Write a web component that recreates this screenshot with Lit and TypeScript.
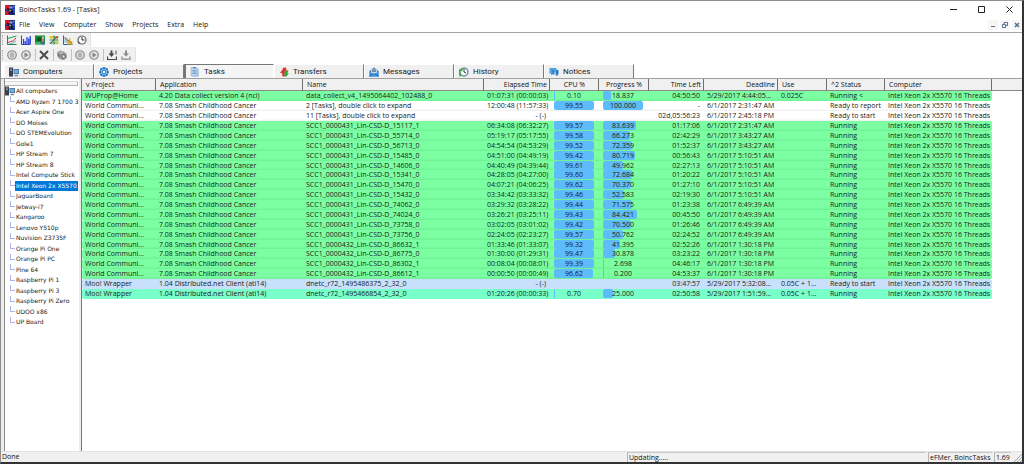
import { LitElement, html, css, svg, nothing } from 'lit';
import { customElement, state } from 'lit/decorators.js';
import { classMap } from 'lit/directives/class-map.js';

interface Task {
  project: string; app: string; name: string; elapsed: string;
  cpu?: string; progress?: string; left: string; deadline: string;
  use?: string; status: string; tone: string;
}

const wcg = (name: string, elapsed: string, cpu: string, progress: string, left: string, deadline: string): Task => ({
  project: 'World Communi...', app: '7.08 Smash Childhood Cancer', name: 'SCC1_' + name,
  elapsed, cpu, progress, left, deadline: '6/1/2017 ' + deadline, status: 'Running', tone: 'run',
});

const TASKS: Task[] = [
  { project: 'WUProp@Home', app: '4.20 Data collect version 4 (nci)', name: 'data_collect_v4_1495064402_102488_0', elapsed: '01:07:31 (00:00:03)', cpu: '0.10', progress: '18.837', left: '04:50:50', deadline: '5/29/2017 4:44:05...', use: '0.025C', status: 'Running <', tone: 'run' },
  { project: 'World Communi...', app: '7.08 Smash Childhood Cancer', name: '2 [Tasks], double click to expand', elapsed: '12:00:48 (11:57:33)', cpu: '99.55', progress: '100.000', left: '-', deadline: '6/1/2017 2:31:47 AM', status: 'Ready to report', tone: 'plain' },
  { project: 'World Communi...', app: '7.08 Smash Childhood Cancer', name: '11 [Tasks], double click to expand', elapsed: '- (-)', left: '02d,05:56:23', deadline: '6/1/2017 2:45:18 PM', status: 'Ready to start', tone: 'plain' },
  wcg('0000431_Lin-CSD-D_15117_1', '06:34:08 (06:32:27)', '99.57', '83.639', '01:17:06', '2:31:47 AM'),
  wcg('0000431_Lin-CSD-D_55714_0', '05:19:17 (05:17:55)', '99.58', '66.273', '02:42:29', '3:43:27 AM'),
  wcg('0000431_Lin-CSD-D_56713_0', '04:54:54 (04:53:29)', '99.52', '72.359', '01:52:37', '3:43:27 AM'),
  wcg('0000431_Lin-CSD-D_15485_0', '04:51:00 (04:49:19)', '99.42', '80.719', '00:56:43', '5:10:51 AM'),
  wcg('0000431_Lin-CSD-D_14606_0', '04:40:49 (04:39:44)', '99.61', '49.962', '02:27:13', '5:10:51 AM'),
  wcg('0000431_Lin-CSD-D_15341_0', '04:28:05 (04:27:00)', '99.60', '72.684', '01:20:22', '5:10:51 AM'),
  wcg('0000431_Lin-CSD-D_15470_0', '04:07:21 (04:06:25)', '99.62', '70.370', '01:27:10', '5:10:51 AM'),
  wcg('0000431_Lin-CSD-D_15432_0', '03:34:42 (03:33:32)', '99.46', '52.583', '02:19:30', '5:10:51 AM'),
  wcg('0000431_Lin-CSD-D_74062_0', '03:29:32 (03:28:22)', '99.44', '71.575', '01:23:38', '6:49:39 AM'),
  wcg('0000431_Lin-CSD-D_74024_0', '03:26:21 (03:25:11)', '99.43', '84.421', '00:45:50', '6:49:39 AM'),
  wcg('0000431_Lin-CSD-D_73758_0', '03:02:05 (03:01:02)', '99.42', '70.500', '01:26:46', '6:49:39 AM'),
  wcg('0000431_Lin-CSD-D_73756_0', '02:24:05 (02:23:27)', '99.57', '50.762', '02:24:52', '6:49:39 AM'),
  wcg('0000432_Lin-CSD-D_86632_1', '01:33:46 (01:33:07)', '99.32', '41.395', '02:52:26', '1:30:18 PM'),
  wcg('0000432_Lin-CSD-D_86775_0', '01:30:00 (01:29:31)', '99.47', '30.878', '03:23:22', '1:30:18 PM'),
  wcg('0000432_Lin-CSD-D_86302_1', '00:08:04 (00:08:01)', '99.39', '2.698', '04:46:17', '1:30:18 PM'),
  wcg('0000432_Lin-CSD-D_86612_1', '00:00:50 (00:00:49)', '96.62', '0.200', '04:53:37', '1:30:18 PM'),
  { project: 'Moo! Wrapper', app: '1.04 Distributed.net Client (ati14)', name: 'dnetc_r72_1495486375_2_32_0', elapsed: '- (-)', left: '03:47:57', deadline: '5/29/2017 5:32:08...', use: '0.05C + 1...', status: 'Ready to start', tone: 'wait' },
  { project: 'Moo! Wrapper', app: '1.04 Distributed.net Client (ati14)', name: 'dnetc_r72_1495466854_2_32_0', elapsed: '01:20:26 (00:00:33)', cpu: '0.70', progress: '25.000', left: '02:50:58', deadline: '5/29/2017 1:51:59...', use: '0.05C + 1...', status: 'Running', tone: 'gpu' },
];

const COMPUTERS = ['AMD Ryzen 7 1700 3', 'Acer Aspire One', 'DO Moises', 'DO STEMEvolution', 'Gole1', 'HP Stream 7', 'HP Stream 8',
  'Intel Compute Stick', 'Intel Xeon 2x X5570', 'JaguarBoard', 'Jetway-i7', 'Kangaroo', 'Lenovo Y510p', 'Nuvision Z3735F',
  'Orange Pi One', 'Orange Pi PC', 'Pine 64', 'Raspberry Pi 1', 'Raspberry Pi 3', 'Raspberry Pi Zero', 'UDOO x86', 'UP Board'];

const pause = svg`<circle cx="10" cy="10" r="8.500" fill="#e2e2e2" stroke="#8a8a8a" stroke-width="2.400"/><path d="M8 5v10M12 5v10" stroke="#858585" stroke-width="2"/>`;
const play = svg`<circle cx="10" cy="10" r="8.500" fill="#e2e2e2" stroke="#8a8a8a" stroke-width="2.400"/><path d="M7 5l8 5-8 5z" fill="#858585"/>`;

const ICONS: Record<string, unknown> = {
  app: svg`<path d="M0 0h20v20H0z" fill="#1c2f86"/><path d="M0 0h9v9H0z" fill="#e01b2c"/><path d="M0 12h8v8H0z" fill="#c81a30"/><path d="M9 3h6v4H9z" fill="#8fa6e8"/><path d="M13 8h7v7h-7z" fill="#2457d8"/><path d="M4 6l4 3 4 0 4 5M10 9l-2 9M12 12l3 6" stroke="#10142e" stroke-width="3" fill="none"/><path d="M9 8l4 3-4 3z" fill="#d9a56a"/><path d="M16 2h3v3h-3z" fill="#6f87d8"/>`,
  lines: svg`<path d="M1 1v18h18" stroke="#2f7f4f" stroke-width="2" fill="none"/><path d="M2 5h16M2 10h16M2 14h16" stroke="#d8dde0"/><path d="M2 15l5-2 5-1 6-6" stroke="#e0303a" stroke-width="2" fill="none"/><path d="M2 7l6-2 4-1 7-2" stroke="#21a15a" stroke-width="2" fill="none"/><path d="M4 18l7-2 7-4" stroke="#4ab5d8" stroke-width="2" fill="none"/>`,
  bars: svg`<path d="M1 1v18h18" stroke="#3347b8" stroke-width="2" fill="none"/><path d="M5 18V8M8.500 18V12M12 18V4M15.500 18V7M18.500 18V2" stroke="#2743e0" stroke-width="2.600"/>`,
  board: svg`<path d="M0 1h20v18H0z" fill="#1a8a34"/><path d="M4 5h8v7H4z" fill="#0b5220"/><path d="M1 16h10" stroke="#8fd88f" stroke-width="2"/><path d="M16 3v12" stroke="#e8e8f5" stroke-width="3"/><path d="M16 7v8" stroke="#e02222" stroke-width="2"/><circle cx="16" cy="16" r="3" fill="#3566e0"/>`,
  gridplot: svg`<path d="M1 4h18M1 10h18M1 16h18M10 1v18" stroke="#2f8f3f" stroke-width="2"/><path d="M2 2h6v5H2zM12 12h6v5h-6z" fill="#e2c82f"/><path d="M3 17l7-8 7-6" stroke="#24407a" stroke-width="2" fill="none"/><path d="M13 3h5v4h-5z" fill="#d84a3a"/>`,
  hist: svg`<path d="M1 1v18h18" stroke="#2f62a8" stroke-width="2" fill="none"/><path d="M3 3l6 4 4 8H3z" fill="#8cc7d8"/><path d="M8 19V10h4V6h3v7h4v6z" fill="#e5b93a"/><path d="M3 5l6 5 9 6" stroke="#b06a28" stroke-width="2" fill="none"/>`,
  clock: svg`<circle cx="10" cy="10" r="8" fill="#f7f7f7" stroke="#666" stroke-width="2.400"/><path d="M10 4v6h5" stroke="#333" stroke-width="2" fill="none"/><path d="M2 13l3 5" stroke="#333" stroke-width="2"/>`,
  pause, play,
  cross: svg`<path d="M2 2l16 16M18 2L2 18" stroke="#4c4c4c" stroke-width="4"/>`,
  cubes: svg`<path d="M0 4l7-3 6 2 6 4 1 8-6 5-7-1-5-4z" fill="#9c9c9c"/><path d="M1 5l5 2 6-3" stroke="#e2e2e2" stroke-width="1.500" fill="none"/><path d="M1 5v7l5 3V8z" fill="#7c7c7c"/><circle cx="13" cy="13" r="4" fill="#b8b8b8" stroke="#666" stroke-width="2"/><path d="M11 11l4 4" stroke="#f2f2f2" stroke-width="1.500"/>`,
  down: svg`<path d="M7 1v6H3l6 7 6-7h-4V1z" fill="#4b4b4b"/><path d="M1 13v6h18v-6" stroke="#4b4b4b" stroke-width="2.500" fill="none"/><path d="M18 1v8" stroke="#4b4b4b" stroke-width="2"/>`,
  downlight: svg`<path d="M8 1v6H4l6 6 6-6h-4V1z" fill="#8a8a8a"/><path d="M2 13v5h16v-5" stroke="#8a8a8a" stroke-width="2.500" fill="none"/>`,
  computers: svg`<path d="M0 1h8v18H0z" fill="#3b4152"/><path d="M2 4h4M2 7h4" stroke="#aeb6c8" stroke-width="1.500"/><path d="M9 4h11v10H9z" fill="#5a6a86"/><path d="M10.500 5.500h8v7h-8z" fill="#5fb4f2"/><path d="M11 17h7" stroke="#7a879c" stroke-width="3"/>`,
  projects: svg`<circle cx="10" cy="10" r="9" fill="#2f86d3"/><path d="M10 0v20M0 10h20M3 3l14 14M17 3L3 17" stroke="#2674bd" stroke-width="2.500"/><circle cx="10" cy="10" r="6" fill="#8fcbf5"/><circle cx="10" cy="10" r="3.500" fill="#e9f6ff" stroke="#1c5d9f" stroke-width="1.500"/>`,
  tasks: svg`<path d="M5 3h12v16H5z" fill="#8db9dc"/><path d="M2 1h11l3 4v13H2z" fill="#b9d7ee" stroke="#7da7c8"/><path d="M5 7h8M5 10h8M5 13h8" stroke="#5e8fb8" stroke-width="1.500"/><path d="M6 0h6v3H6z" fill="#5f8fb5"/>`,
  transfers: svg`<path d="M7 19l-1-7H2l8-11 5 8h-4l1 10z" fill="#e1302e"/><path d="M7 2l7-1 1 6h4l-4 8-7-6 3-1z" fill="#d83a34"/><path d="M11 8h6v5h3l-6 7-6-7h3z" fill="#35a648"/>`,
  messages: svg`<path d="M1 8l9-7 9 7v11H1z" fill="#2f7cc9"/><path d="M4 5h12v8H4z" fill="#c9d9e4"/><path d="M6 7h8M6 9h8" stroke="#5d7084" stroke-width="1.500"/><path d="M1 9l9 6 9-6v10H1z" fill="#3f96e2"/><path d="M1 19l7-6M19 19l-7-6" stroke="#1d5b9c" stroke-width="1.500"/>`,
  history: svg`<circle cx="10" cy="10" r="8" fill="#f3f8fb" stroke="#5c7f96" stroke-width="2.500"/><path d="M10 4v6l4 2" stroke="#2e4354" stroke-width="2" fill="none"/><path d="M4 18A9 9 0 0 1 3 5" stroke="#46a842" stroke-width="3.500" fill="none"/><path d="M0 6l7-4v7z" fill="#46a842"/>`,
  notices: svg`<path d="M1 2h14v11H8l-4 4v-4H1z" fill="#4ba0e4"/><path d="M7 6h12v9h-2v4l-4-4H7z" fill="#2378c8"/><path d="M12 7v2M12 10.500v4" stroke="#fff" stroke-width="2.500"/>`,
};

const icon = (name: string) => html`<svg class="icon" viewBox="0 0 20 20" aria-hidden="true">${ICONS[name]}</svg>`;

const base = css`
  * { box-sizing: border-box; }
  button { font: inherit; color: inherit; background: none; border: 0; padding: 0; margin: 0; }
  .icon { display: block; width: 10px; height: 10px; flex: none; }
`;

@customElement('bt-title')
class BtTitle extends LitElement {
  static styles = [base, css`
    :host { display: block; font-size: 7px; line-height: 14px; }
    .row { display: flex; align-items: center; height: 15px; padding: 0 0 0 4px; gap: 4px; }
    .row.top { height: 16px; padding: 1px 1px 0 4px; }
    .row.menu { gap: 9px; }
    .menu .icon { margin-right: -5px; }
    .grow { flex: 1; }
    .win { display: grid; place-items: center; width: 24px; height: 14px; }
    .win svg { width: 7px; height: 7px; display: block; }
    .mdi { display: flex; gap: 2px; }
    .mdi button { width: 10px; height: 10px; display: grid; place-items: center; background: #f6f6f6; }
    .mdi svg { width: 6px; height: 6px; display: block; }
    .win path { fill: none; stroke: #222; }
    .mdi path { fill: none; stroke: #55708c; }
  `];
  render() {
    return html`
      <div class="row top">${icon('app')}<span class="grow">BoincTasks 1.69 - [Tasks]</span>
        <button class="win" aria-label="Minimize"><svg viewBox="0 0 7 7"><path d="M0 3.500h7"/></svg></button>
        <button class="win" aria-label="Maximize"><svg viewBox="0 0 7 7"><path d="M.5.500h6v6h-6z"/></svg></button>
        <button class="win" aria-label="Close"><svg viewBox="0 0 7 7"><path d="M.5.500l6 6M6.500.500l-6 6"/></svg></button>
      </div>
      <div class="row menu">${icon('app')}
        ${['File', 'View', 'Computer', 'Show', 'Projects', 'Extra', 'Help'].map(m => html`<button>${m}</button>`)}
        <span class="grow"></span>
        <span class="mdi">
          <button aria-label="Minimize view"><svg viewBox="0 0 6 6"><path d="M1 4.500h4"/></svg></button>
          <button aria-label="Restore view"><svg viewBox="0 0 6 6"><path d="M.5 2.500h3v3h-3zM2 2V.500h3.500v3H4"/></svg></button>
          <button aria-label="Close view"><svg viewBox="0 0 6 6"><path d="M1 1l4 4M5 1L1 5" stroke-width="1.500"/></svg></button>
        </span>
      </div>`;
  }
}

@customElement('bt-toolbars')
class BtToolbars extends LitElement {
  static styles = [base, css`
    :host { display: flex; flex-direction: column; align-items: flex-start; border-top: 1px solid #a6a6a6; background: #fff; }
    .bar { display: flex; align-items: center; gap: 4px; background: #f0f0f0; padding: 0 3px 0 1px; height: 14px; border-right: 1px solid #e2e2e2; border-bottom: 1px solid #fafafa; }
    .bar.low { height: 15px; border-bottom: 0; padding-right: 4px; }
    .grip { width: 1px; height: 10px; border-left: 1px dotted #aaa; }
    .sep { width: 1px; height: 12px; background: #c2c2c2; margin: 0 -1px 0 0; }
  `];
  render() {
    const bar = (cls: string, items: string[]) => html`<div class="bar ${cls}" role="toolbar"><span class="grip"></span>
      ${items.map(i => i === '|' ? html`<span class="sep"></span>` : html`<button aria-label=${i}>${icon(i)}</button>`)}</div>`;
    return html`${bar('', ['lines', 'bars', 'board', 'gridplot', 'hist', 'clock'])}
      ${bar('low', ['pause', 'play', '|', 'cross', '|', 'cubes', '|', 'pause', 'play', '|', 'down', 'downlight'])}`;
  }
}

@customElement('bt-tabs')
class BtTabs extends LitElement {
  @state() private active = 'Tasks';
  static styles = [base, css`
    :host { display: block; background: #fff; padding-left: 3px; border-bottom: 1px solid #a0a0a0; }
    .tabs { display: flex; width: max-content; background: #f0f0f0; }
    .tab { display: flex; align-items: center; gap: 4px; width: 90px; height: 14px; padding: 0 4px; font: 8px/12px Roboto, sans-serif; color: #222;
      border-top: 1px solid #fff; border-left: 1px solid #fff; border-right: 1px solid #7a7a7a; }
    .tab.on { border-top-color: #777; border-left: 2px solid #777; border-right-color: #fff; background: #f5f5f5; }
  `];
  render() {
    const tabs = ['Computers', 'Projects', 'Tasks', 'Transfers', 'Messages', 'History', 'Notices'];
    return html`<div class="tabs" role="tablist">${tabs.map(t => html`<button role="tab" aria-selected=${t === this.active}
      class=${classMap({ tab: true, on: t === this.active })} @click=${() => { this.active = t; }}>${icon(t.toLowerCase())}<span>${t}</span></button>`)}</div>`;
  }
}

@customElement('bt-tree')
class BtTree extends LitElement {
  @state() private selected = 'Intel Xeon 2x X5570';
  static styles = [base, css`
    :host { display: block; background: #fff; border-left: 1px solid #8c8c8c; color: #222; overflow: hidden; }
    .head { height: 5px; margin: 2px 1px 0 0; background: #f6f6f6; border: 1px solid #b5b5b5; border-top-color: #dcdcdc; border-left: 0; }
    ul { list-style: none; margin: 0; padding: 0; display: grid; grid-auto-rows: 10px 11px; font: 6px/10px "DejaVu Sans", sans-serif; }
    li { display: flex; align-items: center; }
    .node { padding-left: 5px; }
    .branch { width: 5px; height: 6px; border-left: 1px solid #a9b4f0; border-bottom: 1px solid #a9b4f0; align-self: flex-start; flex: none; }
    button { white-space: nowrap; padding: 0 0 0 1px; height: 10px; text-align: left; }
    .sel { background: #0078d7; color: #fff; flex: 1; margin-right: 1px; }
  `];
  render() {
    return html`<div class="head"></div><ul>
      <li>${icon('computers')}<button>All computers</button></li>
      ${COMPUTERS.map(c => html`<li class="node"><span class="branch"></span>
        <button class=${classMap({ sel: c === this.selected })} @click=${() => { this.selected = c; }}>${c}</button></li>`)}</ul>`;
  }
}

@customElement('bt-tasks')
class BtTasks extends LitElement {
  static styles = [base, css`
    :host { display: block; background: #fff; min-width: 0; overflow: hidden; }
    table { width: 100%; table-layout: fixed; border-collapse: separate; border-spacing: 0; color: #182018; }
    col.w49 { width: 49px; } col.w50 { width: 50px; } col.w55 { width: 55px; } col.w58 { width: 58px; } col.w66 { width: 66px; }
    col.w74 { width: 74px; } col.w107 { width: 107px; } col.w147 { width: 147px; } col.w181 { width: 181px; }
    th, td { padding: 0 3px; font-weight: 400; font-size: 7px; line-height: 10px; white-space: nowrap; overflow: hidden; text-align: left; }
    th { background: #f0f0f0; height: 12px; padding: 0 3px 0 4px; border-right: 1px solid #6e6e6e; border-bottom: 1px solid #8a8a8a; color: #111; }
    th:last-child { border-right: 0; }
    td { height: 10px; }
    tr:nth-child(8n) td { height: 9px; line-height: 9px; }
    .r { text-align: right; padding-right: 4px; }
    th.r { padding-right: 2px; }
    .c { text-align: center; }
    td.bar { padding: 0 4px; vertical-align: top; }
    .run td { background: linear-gradient(#7cffa2 70%, #6ff096); }
    .wait td { background: #c8e0fb; }
    .gpu td { background: #78ffca; }
    .plain td { background: linear-gradient(#fff 80%, #ececec); }
    tr td:first-child { border-radius: 2px 0 0 2px; }
    tr td:nth-last-child(2) { border-radius: 0 2px 2px 0; }
    tbody td:last-child { background: none; }
    .meter { display: grid; grid-template-rows: 9px; width: 40px; height: 9px; line-height: 10px; }
    .fill { grid-area: 1 / 1; background: #5ebcfb; border-radius: 2px; min-width: 1px; }
    .value { grid-area: 1 / 1; text-align: center; }
  `];
  private meter(v?: string) {
    return v ? html`<div class="meter"><span class="fill" style="width:${v}%"></span><span class="value">${v}</span></div>` : nothing;
  }
  render() {
    return html`<table>
      <colgroup>${[74, 147, 181, 66, 49, 50, 55, 74, 49, 58, 107].map(w => html`<col class="w${w}">`)}<col></colgroup>
      <thead><tr><th>v Project</th><th>Application</th><th>Name</th><th class="r">Elapsed Time</th><th class="c">CPU %</th><th class="c">Progress %</th>
        <th class="r">Time Left</th><th class="r">Deadline</th><th>Use</th><th>^2 Status</th><th>Computer</th><th></th></tr></thead>
      <tbody>${TASKS.map(t => html`<tr class=${t.tone}><td>${t.project}</td><td>${t.app}</td><td>${t.name}</td><td class="r">${t.elapsed}</td>
        <td class="bar">${this.meter(t.cpu)}</td><td class="bar">${this.meter(t.progress)}</td><td class="r">${t.left}</td>
        <td class=${t.deadline.endsWith('...') ? '' : 'r'}>${t.deadline}</td><td>${t.use ?? ''}</td><td>${t.status}</td>
        <td>Intel Xeon 2x X5570 16 Threads</td><td></td></tr>`)}</tbody></table>`;
  }
}

@customElement('app-root')
class AppRoot extends LitElement {
  static styles = [base, css`
    :host { display: flex; flex-direction: column; min-height: 100vh; box-sizing: border-box; background: #fff; color: #151515;
      font: 7px/10px "Open Sans", "Noto Sans", sans-serif; border: 1px solid #8e8e8e; border-right: 2px solid #333; border-bottom: 2px solid #333; }
    bt-tabs { margin-top: 2px; }
    .body { flex: 1; display: grid; grid-template-columns: 75px minmax(0, 1fr); column-gap: 2px; background: #ececec; padding-left: 3px; }
    bt-tasks { border-left: 1px solid #777; }
    footer { display: flex; align-items: stretch; height: 11px; background: #f0f0f0; gap: 2px; border-top: 1px solid #e2e2e2; line-height: 10px; }
    .first { flex: 629; padding-left: 1px; }
    .cell { border-left: 1px solid #b4b4b4; border-top: 1px solid #c8c8c8; padding: 0 1px; line-height: 9px; }
    .mid { flex: 299; }
    .who { width: 64px; }
    .ver { width: 17px; }
    .size { width: 9px; align-self: flex-end; display: block; }
  `];
  render() {
    return html`<bt-title></bt-title><bt-toolbars></bt-toolbars><bt-tabs></bt-tabs>
      <div class="body"><bt-tree></bt-tree><bt-tasks></bt-tasks></div>
      <footer><span class="first">Done</span><span class="cell mid">Updating.....</span><span class="cell who">eFMer, BoincTasks</span><span class="cell ver">1.69</span>
        <svg class="size" viewBox="0 0 9 9"><path d="M1 9l8-8M4 9l5-5M7 9l2-2" stroke="#a8a8a8"/></svg></footer>`;
  }
}
